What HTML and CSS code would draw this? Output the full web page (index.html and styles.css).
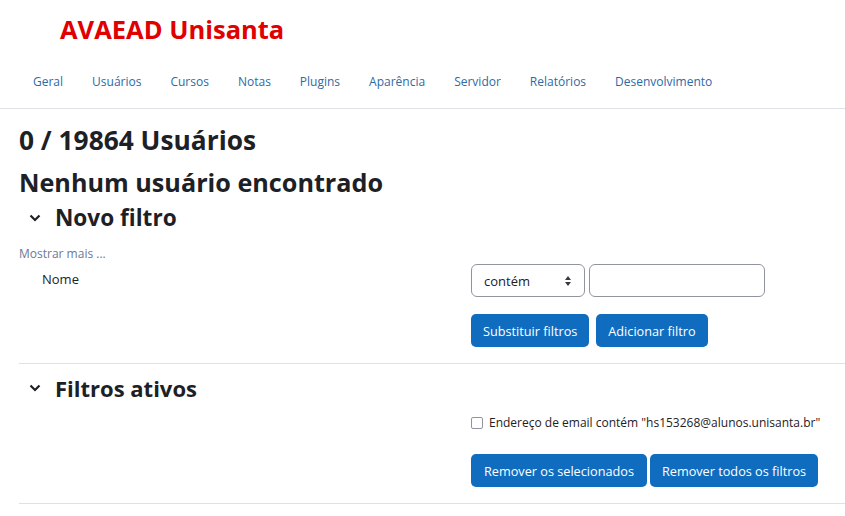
FILE: index.html
```html
<!DOCTYPE html>
<html lang="pt-BR">
<head>
<meta charset="utf-8">
<title>AVAEAD Unisanta</title>
<link rel="stylesheet" href="styles.css">
</head>
<body>
<header class="site-header">
  <div class="brand">AVAEAD Unisanta</div>
  <nav class="main-nav">
    <a href="#">Geral</a>
    <a href="#">Usuários</a>
    <a href="#">Cursos</a>
    <a href="#">Notas</a>
    <a href="#">Plugins</a>
    <a href="#">Aparência</a>
    <a href="#">Servidor</a>
    <a href="#">Relatórios</a>
    <a href="#">Desenvolvimento</a>
  </nav>
</header>
<main class="content">
  <h2 class="page-title count">0 / 19864 Usuários</h2>
  <h2 class="page-title">Nenhum usuário encontrado</h2>

  <section class="filter-block">
    <h3 class="section-title"><svg class="chev" viewBox="0 0 12 8" width="12" height="8"><path d="M1.5 1.5 L6 6 L10.5 1.5" fill="none" stroke="#1d2125" stroke-width="2.2"/></svg>Novo filtro</h3>
    <a class="more-link" href="#">Mostrar mais ...</a>
    <div class="form-row name-row">
      <div class="form-label">Nome</div>
      <div class="form-controls">
        <div class="select">contém<svg class="updown" viewBox="0 0 8 12" width="8" height="12"><path d="M4 1 L7 5 H1 Z M4 11 L7 7 H1 Z" fill="#343a40"/></svg></div>
        <div class="text-input"></div>
      </div>
    </div>
    <div class="form-row buttons-row">
      <div class="form-label"></div>
      <div class="form-controls gap7">
        <button class="btn">Substituir filtros</button>
        <button class="btn">Adicionar filtro</button>
      </div>
    </div>
  </section>

  <section class="filter-block">
    <h3 class="section-title second"><svg class="chev" viewBox="0 0 12 8" width="12" height="8"><path d="M1.5 1.5 L6 6 L10.5 1.5" fill="none" stroke="#1d2125" stroke-width="2.2"/></svg>Filtros ativos</h3>
    <div class="form-row check-row">
      <div class="form-label"></div>
      <div class="form-controls">
        <label class="check"><span class="box"></span>Endereço de email contém "hs153268@alunos.unisanta.br"</label>
      </div>
    </div>
    <div class="form-row buttons-row2">
      <div class="form-label"></div>
      <div class="form-controls gap3">
        <button class="btn wide">Remover os selecionados</button>
        <button class="btn">Remover todos os filtros</button>
      </div>
    </div>
  </section>
</main>
</body>
</html>
```

FILE: styles.css
```css
* { box-sizing: border-box; }
html, body { margin: 0; padding: 0; background: #fff; }
body {
  font-family: "Open Sans", "Noto Sans", sans-serif;
  color: #1d2125;
  font-size: 13px;
}
.site-header {
  border-bottom: 1px solid #dee2e6;
  height: 109px;
}
.brand {
  padding: 11px 0 0 60px;
  height: 60px;
  color: #e00000;
  font-weight: bold;
  font-size: 25.5px;
  line-height: 36px;
}
.main-nav {
  display: flex;
  padding-left: 33px;
  gap: 29px;
  height: 42px;
  align-items: center;
}
.main-nav a {
  color: #2d6aa6;
  text-decoration: none;
  font-size: 12px;
}
.content {
  padding-left: 19px;
}
.page-title {
  margin: 0;
  font-size: 25.2px;
  line-height: 32px;
  font-weight: bold;
}
.page-title.count { margin-top: 15px; font-size: 26.3px; }
.page-title + .page-title { margin-top: 10px; }
.filter-block {
  border-bottom: 1px solid #dee2e6;
}
.section-title {
  margin: 4px 0 0;
  display: flex;
  align-items: center;
  font-size: 22.6px;
  line-height: 32px;
  font-weight: bold;
}
.section-title.second { margin-top: 8px; font-size: 22px; }
.chev { margin: 0 14px 0 10px; }
.more-link {
  display: block;
  margin-top: 11px;
  font-size: 12px;
  color: #6a7a96;
  text-decoration: none;
}
.form-row { display: flex; }
.name-row { margin-top: 2px; }
.form-label {
  width: 452px;
  padding-left: 23px;
  line-height: 33px;
}
.name-row .form-label { line-height: 30px; }
.form-controls { display: flex; gap: 4px; }
.form-controls.gap7 { gap: 7px; }
.form-controls.gap3 { gap: 3px; }
.select {
  width: 114px;
  height: 33px;
  border: 1px solid #8f959e;
  border-radius: 6px;
  padding: 0 12px;
  display: flex;
  align-items: center;
  justify-content: space-between;
  font-size: 13px;
}
.text-input {
  width: 176px;
  height: 33px;
  border: 1px solid #8f959e;
  border-radius: 6px;
}
.btn {
  font-family: inherit;
  background: #0f6cbf;
  color: #fff;
  border: none;
  border-radius: 5px;
  height: 33px;
  padding: 0 12px;
  font-size: 12.7px;
  margin: 0;
}
.btn.wide { padding: 0 13px; }
.buttons-row { margin-top: 17px; padding-bottom: 16px; }
.check-row { margin-top: 10px; }
.check-row .form-label { line-height: 20px; }
.check { display: flex; align-items: center; font-size: 12px; }
.box {
  width: 12px; height: 12px;
  border: 1px solid #8f959e;
  border-radius: 2px;
  margin-right: 6px;
}
.buttons-row2 { margin-top: 23px; padding-bottom: 16px; }
```
